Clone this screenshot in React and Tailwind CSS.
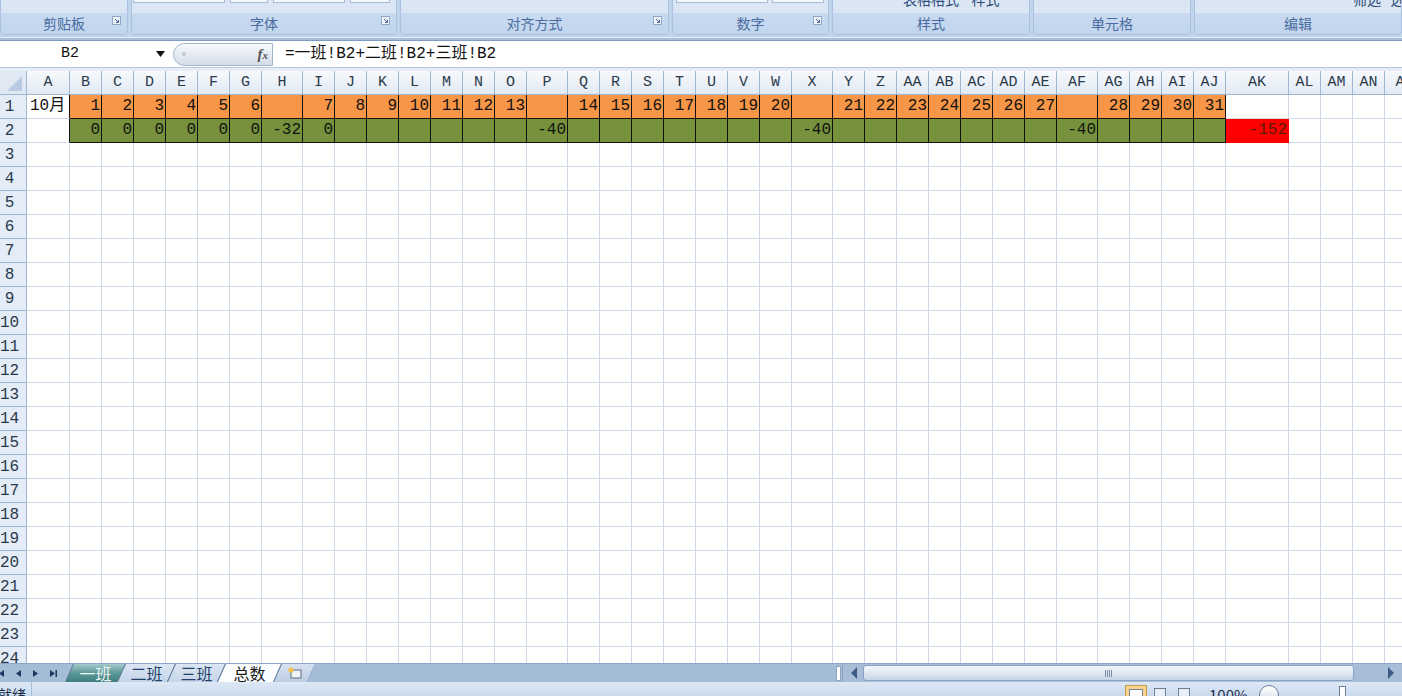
import React from 'react';

const SHEET = "font-['Liberation_Mono','Noto_Sans_CJK_SC',monospace]";
const UI = "font-['Noto_Sans_CJK_SC','Liberation_Sans',sans-serif]";

// column names and widths (classes written out in full)
const colNames = [
  'A', 'B', 'C', 'D', 'E', 'F', 'G', 'H', 'I', 'J', 'K', 'L', 'M', 'N', 'O', 'P', 'Q', 'R', 'S', 'T',
  'U', 'V', 'W', 'X', 'Y', 'Z', 'AA', 'AB', 'AC', 'AD', 'AE', 'AF', 'AG', 'AH', 'AI', 'AJ', 'AK', 'AL', 'AM', 'AN', 'AO',
];
const widths = {
  A: 'w-[43px]', H: 'w-[41px]', P: 'w-[41px]', X: 'w-[41px]', AF: 'w-[41px]', AK: 'w-[63px]', AO: 'w-[40px]',
};
const colW = (n) => widths[n] || 'w-[32px]';

// row 1: day numbers, blanks on H, P, X, AF
const row1 = {};
let day = 1;
colNames.slice(1, 36).forEach((n) => {
  if (['H', 'P', 'X', 'AF'].includes(n)) row1[n] = '';
  else row1[n] = String(day++);
});
const row2 = { B: '0', C: '0', D: '0', E: '0', F: '0', G: '0', H: '-32', I: '0', P: '-40', X: '-40', AF: '-40', AK: '-152' };

const ribbonGroups = [
  { label: '剪贴板', w: 'w-[128px]', launcher: true },
  { label: '字体', w: 'w-[266px]', launcher: true },
  { label: '对齐方式', w: 'w-[269px]', launcher: true },
  { label: '数字', w: 'w-[157px]', launcher: true },
  { label: '样式', w: 'w-[198px]', launcher: false },
  { label: '单元格', w: 'w-[158px]', launcher: false },
  { label: '编辑', w: 'w-[208px]', launcher: false },
];

function Launcher() {
  return (
    <svg width="9" height="9" viewBox="0 0 9 9" className="shrink-0">
      <rect x="0.5" y="0.5" width="8" height="8" fill="#eef3f9" stroke="#8fa8c8" />
      <path d="M3 3 L6.5 6.5 M6.5 4 V6.5 H4" stroke="#4a6a96" strokeWidth="1" fill="none" />
    </svg>
  );
}

function Ribbon() {
  return (
    <div className="h-[37px] bg-[#c0d4ec] flex gap-[3px] overflow-hidden">
      {ribbonGroups.map((g, i) => (
        <div key={i} className={`${g.w} shrink-0 h-[35px] flex flex-col border-x border-b border-[#aac2e0] rounded-b-[3px] bg-[#dae6f4] relative`}>
          <div className="h-[13px] relative overflow-hidden">
            {g.label === '字体' && (
              <div className="flex gap-[5px] pl-[1px]">
                <div className="w-[92px] h-[3px] bg-[#f4f7fb] border border-[#a7bbd6] border-t-0" />
                <div className="w-[38px] h-[3px] bg-[#f4f7fb] border border-[#a7bbd6] border-t-0" />
                <div className="w-[72px] h-[3px] bg-[#f4f7fb] border border-[#a7bbd6] border-t-0" />
                <div className="w-[40px] h-[3px] bg-[#f4f7fb] border border-[#a7bbd6] border-t-0" />
              </div>
            )}
            {g.label === '数字' && (
              <div className="flex gap-[4px] pl-[3px]">
                <div className="w-[92px] h-[3px] bg-[#f4f7fb] border border-[#a7bbd6] border-t-0" />
                <div className="w-[52px] h-[3px] bg-[#f4f7fb] border border-[#a7bbd6] border-t-0" />
              </div>
            )}
            {g.label === '样式' && (
              <div className={`${UI} text-[14px] leading-none text-[#2b4a78] -mt-[8px] pl-[70px] whitespace-nowrap`}>表格格式&nbsp;&nbsp;&nbsp;&nbsp;样式</div>
            )}
            {g.label === '编辑' && (
              <div className={`${UI} text-[14px] leading-none text-[#2b4a78] -mt-[8px] pl-[158px] whitespace-nowrap`}>筛选&nbsp;&nbsp;&nbsp;选择</div>
            )}
          </div>
          <div className="flex-1 bg-gradient-to-b from-[#c9daf0] to-[#c1d5ee] flex items-center justify-center relative">
            <span className={`${UI} text-[14px] text-[#4a6ca0] leading-none -mt-[1px]`}>{g.label}</span>
            {g.launcher && (
              <span className="absolute right-[6px] top-[3px]"><Launcher /></span>
            )}
          </div>
        </div>
      ))}
    </div>
  );
}

function FormulaBar() {
  return (
    <div className="h-[27px] bg-white flex items-center border-b border-[#b8c8dc]">
      <div className={`${SHEET} w-[140px] text-center text-[15px] text-[#111]`}>B2</div>
      <svg width="9" height="6" viewBox="0 0 9 6" className="ml-[16px]">
        <path d="M0 0 H9 L4.5 6 Z" fill="#111" />
      </svg>
      <div className="ml-[8px] w-[100px] h-[23px] rounded-l-full border border-[#a3b6cf] bg-gradient-to-b from-[#f7f9fc] via-[#e6ecf3] to-[#d3dce8] flex items-center">
        <span className="ml-[8px] w-[4px] h-[4px] rounded-full bg-[#c2ccd8]" />
        <span className="ml-auto mr-[4px] text-[15px] italic font-bold text-[#555] font-['Liberation_Serif',serif]">f<span className="text-[11px]">x</span></span>
      </div>
      <div className={`${SHEET} ml-[12px] text-[16px] text-[#111] whitespace-nowrap`}>=一班!B2+二班!B2+三班!B2</div>
    </div>
  );
}

function HeaderRow() {
  return (
    <div className="flex h-[24px] shrink-0">
      <div className="w-[27px] shrink-0 border-r border-b border-[#9eb6ce] bg-[#dfe8f3] relative overflow-hidden">
        <svg width="26" height="23" viewBox="0 0 26 23" className="absolute left-0 top-0">
          <path d="M22 5 L22 20 L7 20 Z" fill="#b9cbe2" />
        </svg>
      </div>
      {colNames.map((n) => (
        <div
          key={n}
          className={`${colW(n)} shrink-0 border-r border-b border-[#9eb6ce] bg-gradient-to-b from-[#f7f9fc] to-[#e1e9f4] flex items-center justify-center ${SHEET} text-[15px] text-[#2a3a4a] leading-none`}
        >
          {n}
        </div>
      ))}
    </div>
  );
}

function DataRow({ r }) {
  return (
    <div className="flex h-[24px] shrink-0">
      <div className={`w-[27px] shrink-0 border-r border-b border-[#9eb6ce] bg-[#e4ecf7] flex items-center ${SHEET} text-[16px] text-[#2a3a4a] leading-none`}>
        <span className="w-[19px] text-center">{r}</span>
      </div>
      {colNames.map((n, i) => {
        const inRange = (r === 1 || r === 2) && i >= 1 && i <= 35;
        let bg = 'bg-white';
        let border = 'border-[#d0d7e5]';
        let rightBorder = '';
        let text = 'text-[#111]';
        let val = '';
        if (inRange) {
          bg = r === 1 ? 'bg-[#f79646]' : 'bg-[#76923c]';
          border = 'border-[#111]';
          val = r === 1 ? row1[n] : row2[n] || '';
        } else if (r === 2 && n === 'AK') {
          bg = 'bg-[#ff0000]';
          border = 'border-[#ff0000]';
          val = row2.AK;
          text = 'text-[#5a1a00]';
        } else if ((r === 1 || r === 2) && n === 'A') {
          rightBorder = 'border-r-[#111]';
        }
        if (r === 1 && n === 'A') val = '10月';
        const align = n === 'A' ? 'justify-start pl-[3px]' : 'justify-end pr-[1px]';
        return (
          <div
            key={n}
            className={`${colW(n)} shrink-0 border-r border-b ${border} ${rightBorder} ${bg} flex items-center pb-[2px] ${align} ${SHEET} text-[16px] ${text} leading-none whitespace-nowrap`}
          >
            {val}
          </div>
        );
      })}
    </div>
  );
}

function Tri({ dir, bar }) {
  return (
    <svg width="9" height="9" viewBox="0 0 9 9">
      {dir === 'l' ? <path d="M7 1 L2 4.5 L7 8 Z" fill="#1d3a63" /> : <path d="M2 1 L7 4.5 L2 8 Z" fill="#1d3a63" />}
      {bar === 'l' && <rect x="0" y="1" width="1.5" height="7" fill="#1d3a63" />}
      {bar === 'r' && <rect x="7.5" y="1" width="1.5" height="7" fill="#1d3a63" />}
    </svg>
  );
}

const tabClip = '[clip-path:polygon(8px_0,100%_0,calc(100%-8px)_100%,0_100%)]';

function SheetTab({ label, w, inner, text, active }) {
  return (
    <div className={`${w} h-full shrink-0 -ml-[8px] ${tabClip} bg-[#5d7899] ${active ? 'relative z-10' : ''}`}>
      <div className={`h-full ml-[1px] mb-[1px] ${tabClip} ${inner} flex items-center justify-center ${UI} text-[16px] leading-none ${text}`}>
        {label}
      </div>
    </div>
  );
}

function TabBar() {
  return (
    <div className="h-[19px] shrink-0 flex bg-[#a5bcd7] border-t border-[#8aa5c6]">
      <div className="w-[76px] shrink-0 flex items-center gap-[8px] -ml-[3px] pl-0">
        <Tri dir="l" bar="l" />
        <Tri dir="l" />
        <Tri dir="r" />
        <Tri dir="r" bar="r" />
      </div>
      <SheetTab label="一班" w="w-[60px]" inner="bg-gradient-to-b from-[#a6cbcb] via-[#5c9999] to-[#3d7e7e]" text="text-[#eef6f6]" />
      <SheetTab label="二班" w="w-[58px]" inner="bg-gradient-to-b from-[#dbe6f3] to-[#c5d5ea]" text="text-[#22406a]" />
      <SheetTab label="三班" w="w-[58px]" inner="bg-gradient-to-b from-[#dbe6f3] to-[#c5d5ea]" text="text-[#22406a]" />
      <SheetTab label="总数" w="w-[64px]" inner="bg-[#fbfdff]" text="text-[#1a1a1a]" active />
      <div className={`w-[42px] h-full shrink-0 -ml-[8px] ${tabClip} bg-[#5d7899]`}>
        <div className={`h-full ml-[1px] ${tabClip} bg-gradient-to-b from-[#d6e2f0] to-[#bccde3] flex items-center justify-center`}>
          <svg width="16" height="13" viewBox="0 0 16 13">
            <rect x="4" y="3" width="10" height="8" fill="#eef3f8" stroke="#5f6f86" />
            <circle cx="4" cy="3" r="2.6" fill="#f2c14a" />
          </svg>
        </div>
      </div>
      <div className="w-[527px] shrink-0 flex items-center justify-end pr-[1px]">
        <div className="w-[5px] h-[15px] bg-white border border-[#8ea7c6]" />
      </div>
      <div className="flex-1 flex items-center bg-[#a8bed8] border-l border-[#8aa5c6] px-[6px] gap-[4px]">
        <svg width="10" height="14" viewBox="0 0 10 14"><path d="M8 1 L2 7 L8 13 Z" fill="#3c5a82" /></svg>
        <div className="flex-1 h-[16px] rounded-[3px] border border-[#8aa3c4] bg-gradient-to-b from-[#f3f6fa] via-[#e1e8f1] to-[#c7d4e4] flex items-center justify-center">
          <svg width="8" height="7" viewBox="0 0 8 7">
            <path d="M0.5 0 V7 M2.5 0 V7 M4.5 0 V7 M6.5 0 V7" stroke="#7b8fa8" strokeWidth="1" />
          </svg>
        </div>
        <div className="w-[24px]" />
        <svg width="10" height="14" viewBox="0 0 10 14"><path d="M2 1 L8 7 L2 13 Z" fill="#3c5a82" /></svg>
      </div>
    </div>
  );
}

function StatusBar() {
  return (
    <div className="h-[14px] shrink-0 flex bg-gradient-to-b from-[#dde8f5] to-[#c9daee] overflow-hidden">
      <div className={`${UI} text-[14px] leading-none text-[#1d2f48] pt-[5px] -ml-[2px] w-[34px] border-r border-[#a9bed8]`}>就绪</div>
      <div className="flex-1" />
      <div className="flex gap-[2px] pt-[3px] mr-[14px]">
        <div className="w-[22px] h-[14px] bg-[#f8d48e] border border-[#c89b4a] flex items-start justify-center pt-[3px]">
          <div className="w-[14px] h-[10px] border border-[#6f7f94] bg-[#fff]" />
        </div>
        <div className="w-[22px] h-[14px] flex items-start justify-center pt-[3px]">
          <div className="w-[12px] h-[10px] border border-[#6f7f94] bg-[#e8eef6]" />
        </div>
        <div className="w-[22px] h-[14px] flex items-start justify-center pt-[3px]">
          <div className="w-[12px] h-[10px] border border-[#6f7f94] bg-[#e8eef6]" />
        </div>
      </div>
      <div className={`${UI} text-[15px] leading-none text-[#1d2f48] pt-[5px] w-[50px]`}>100%</div>
      <div className="w-[20px] h-[20px] mt-[3px] rounded-full border border-[#6d7f98] bg-gradient-to-b from-[#ffffff] to-[#ccd8e6]" />
      <div className="w-[60px]" />
      <div className="w-[7px] h-[12px] mt-[4px] bg-white border border-[#6d7f98]" />
      <div className="w-[56px]" />
    </div>
  );
}

export default function App() {
  const rows = Array.from({ length: 24 }, (_, i) => i + 1);
  return (
    <div className="w-[1402px] h-[696px] overflow-hidden flex flex-col bg-white">
      <Ribbon />
      <div className="h-[4px] shrink-0 border-t border-[#e4ecf6] bg-[#a9bedb] border-b border-b-[#7f9cc4]" />
      <FormulaBar />
      <div className="h-[3px] shrink-0 bg-[#e6edf6]" />
      <div className="flex-1 overflow-hidden flex flex-col">
        <HeaderRow />
        {rows.map((r) => (
          <DataRow key={r} r={r} />
        ))}
      </div>
      <TabBar />
      <StatusBar />
    </div>
  );
}
